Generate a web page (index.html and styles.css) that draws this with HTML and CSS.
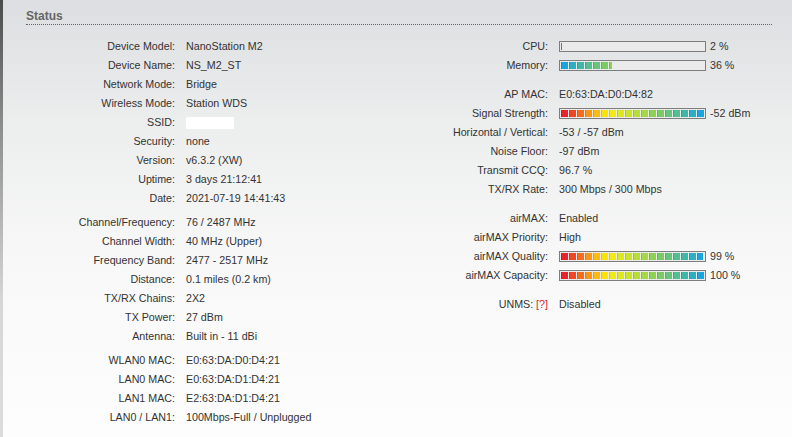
FILE: index.html
```html
<!DOCTYPE html>
<html lang="en">
<head>
  <meta charset="UTF-8" />
  <title>Status</title>
  <link rel="stylesheet" href="styles.css">
</head>
<body>
  <div class="page">
    <div class="strip"></div>
    <div class="content">
      <h2 class="title">Status</h2>

      <div class="columns">
        <div class="col col-left">
          <div class="group">
            <div class="row"><span class="lbl">Device Model:</span><span class="val">NanoStation M2</span></div>
            <div class="row"><span class="lbl">Device Name:</span><span class="val">NS_M2_ST</span></div>
            <div class="row"><span class="lbl">Network Mode:</span><span class="val">Bridge</span></div>
            <div class="row"><span class="lbl">Wireless Mode:</span><span class="val">Station WDS</span></div>
            <div class="row"><span class="lbl">SSID:</span><span class="val"><span class="hidden-box"></span></span></div>
            <div class="row"><span class="lbl">Security:</span><span class="val">none</span></div>
            <div class="row"><span class="lbl">Version:</span><span class="val">v6.3.2 (XW)</span></div>
            <div class="row"><span class="lbl">Uptime:</span><span class="val">3 days 21:12:41</span></div>
            <div class="row"><span class="lbl">Date:</span><span class="val">2021-07-19 14:41:43</span></div>
          </div>
          <div class="group">
            <div class="row"><span class="lbl">Channel/Frequency:</span><span class="val">76 / 2487 MHz</span></div>
            <div class="row"><span class="lbl">Channel Width:</span><span class="val">40 MHz (Upper)</span></div>
            <div class="row"><span class="lbl">Frequency Band:</span><span class="val">2477 - 2517 MHz</span></div>
            <div class="row"><span class="lbl">Distance:</span><span class="val">0.1 miles (0.2 km)</span></div>
            <div class="row"><span class="lbl">TX/RX Chains:</span><span class="val">2X2</span></div>
            <div class="row"><span class="lbl">TX Power:</span><span class="val">27 dBm</span></div>
            <div class="row"><span class="lbl">Antenna:</span><span class="val">Built in - 11 dBi</span></div>
          </div>
          <div class="group">
            <div class="row"><span class="lbl">WLAN0 MAC:</span><span class="val">E0:63:DA:D0:D4:21</span></div>
            <div class="row"><span class="lbl">LAN0 MAC:</span><span class="val">E0:63:DA:D1:D4:21</span></div>
            <div class="row"><span class="lbl">LAN1 MAC:</span><span class="val">E2:63:DA:D1:D4:21</span></div>
            <div class="row"><span class="lbl">LAN0 / LAN1:</span><span class="val">100Mbps-Full / Unplugged</span></div>
          </div>
        </div>

        <div class="col col-right">
          <div class="group">
            <div class="row"><span class="lbl">CPU:</span><span class="val"><span class="bar" data-pct="1" data-scale="usage"></span><span class="pct">2 %</span></span></div>
            <div class="row"><span class="lbl">Memory:</span><span class="val"><span class="bar" data-pct="36" data-scale="usage"></span><span class="pct">36 %</span></span></div>
          </div>
          <div class="group">
            <div class="row"><span class="lbl">AP MAC:</span><span class="val">E0:63:DA:D0:D4:82</span></div>
            <div class="row"><span class="lbl">Signal Strength:</span><span class="val"><span class="bar" data-pct="100" data-scale="signal"></span><span class="pct">-52 dBm</span></span></div>
            <div class="row"><span class="lbl">Horizontal / Vertical:</span><span class="val">-53 / -57 dBm</span></div>
            <div class="row"><span class="lbl">Noise Floor:</span><span class="val">-97 dBm</span></div>
            <div class="row"><span class="lbl">Transmit CCQ:</span><span class="val">96.7 %</span></div>
            <div class="row"><span class="lbl">TX/RX Rate:</span><span class="val">300 Mbps / 300 Mbps</span></div>
          </div>
          <div class="group">
            <div class="row"><span class="lbl">airMAX:</span><span class="val">Enabled</span></div>
            <div class="row"><span class="lbl">airMAX Priority:</span><span class="val">High</span></div>
            <div class="row"><span class="lbl">airMAX Quality:</span><span class="val"><span class="bar" data-pct="99" data-scale="signal"></span><span class="pct">99 %</span></span></div>
            <div class="row"><span class="lbl">airMAX Capacity:</span><span class="val"><span class="bar" data-pct="100" data-scale="signal"></span><span class="pct">100 %</span></span></div>
          </div>
          <div class="group">
            <div class="row"><span class="lbl">UNMS: <span class="help">[?]</span></span><span class="val">Disabled</span></div>
          </div>
        </div>
      </div>
    </div>
  </div>

  <script>
    const palette = [
      "#e8232a", "#ef4723", "#f46c1c", "#f99617", "#fcbb10", "#fde20a",
      "#f1eb12", "#dde81d", "#cae42a", "#b6de37", "#a2d945", "#8ed253",
      "#7acb64", "#66c57a", "#53be91", "#40b6a9", "#2caec3", "#19a5dd"
    ];

    document.querySelectorAll(".bar").forEach(bar => {
      const pct = Number(bar.dataset.pct);
      const colors = bar.dataset.scale === "usage" ? palette.slice().reverse() : palette;
      const fill = document.createElement("span");
      fill.className = "fill";
      fill.style.width = Math.max(1, Math.round(143 * pct / 100)) + "px";
      colors.forEach(c => {
        const seg = document.createElement("span");
        seg.className = "seg";
        seg.style.background = c;
        fill.appendChild(seg);
      });
      bar.appendChild(fill);
    });
  </script>
</body>
</html>
```

FILE: styles.css
```css
* { box-sizing: border-box; }

body {
  margin: 0;
  font-family: "Liberation Sans", Arial, sans-serif;
  font-size: 10.7px;
  color: #333;
  background: #fff;
}

.page {
  display: flex;
  min-height: 437px;
  background: linear-gradient(#dcdee1 0, #eceded 120px, #f8f8f8 260px, #fdfdfd 437px);
}

.strip {
  width: 3px;
  flex: none;
  background: linear-gradient(#4b4b4b 0, #8a8a8a 120px, #d6d6d6 300px, #dcdcdc 437px);
}

.content {
  flex: 1;
  padding: 0 20px 0 23px;
}

.title {
  margin: 0;
  padding: 9px 0 1px;
  font-size: 12px;
  line-height: 14px;
  font-weight: bold;
  color: #666;
  border-bottom: 1px dotted #666;
}

.columns {
  display: flex;
  margin-top: 12px;
}

.col-left { width: 414px; }
.col-right { flex: 1; }

.row {
  display: grid;
  grid-template-columns: 149px 1fr;
  column-gap: 11px;
  height: 19px;
  line-height: 19px;
}

.col-right .row { grid-template-columns: 108px 1fr; }

.lbl {
  text-align: right;
  white-space: nowrap;
}

.val {
  display: flex;
  align-items: center;
  white-space: nowrap;
}

.col-left .group + .group { margin-top: 5px; }
.col-right .group + .group { margin-top: 10px; }

.help { color: #d42a2a; }

.hidden-box {
  display: inline-block;
  width: 48px;
  height: 12px;
  background: #fff;
}

.bar {
  display: inline-block;
  width: 147px;
  height: 11px;
  padding: 1px;
  border: 1px solid #7d7d7d;
  background: #ebebeb;
}

.fill {
  display: flex;
  gap: 1px;
  height: 7px;
  overflow: hidden;
}

.seg {
  flex: none;
  width: 7px;
  height: 7px;
  box-shadow: inset 1px 0 0 rgba(0, 0, 0, 0.12);
}

.pct { margin-left: 4px; }
```
